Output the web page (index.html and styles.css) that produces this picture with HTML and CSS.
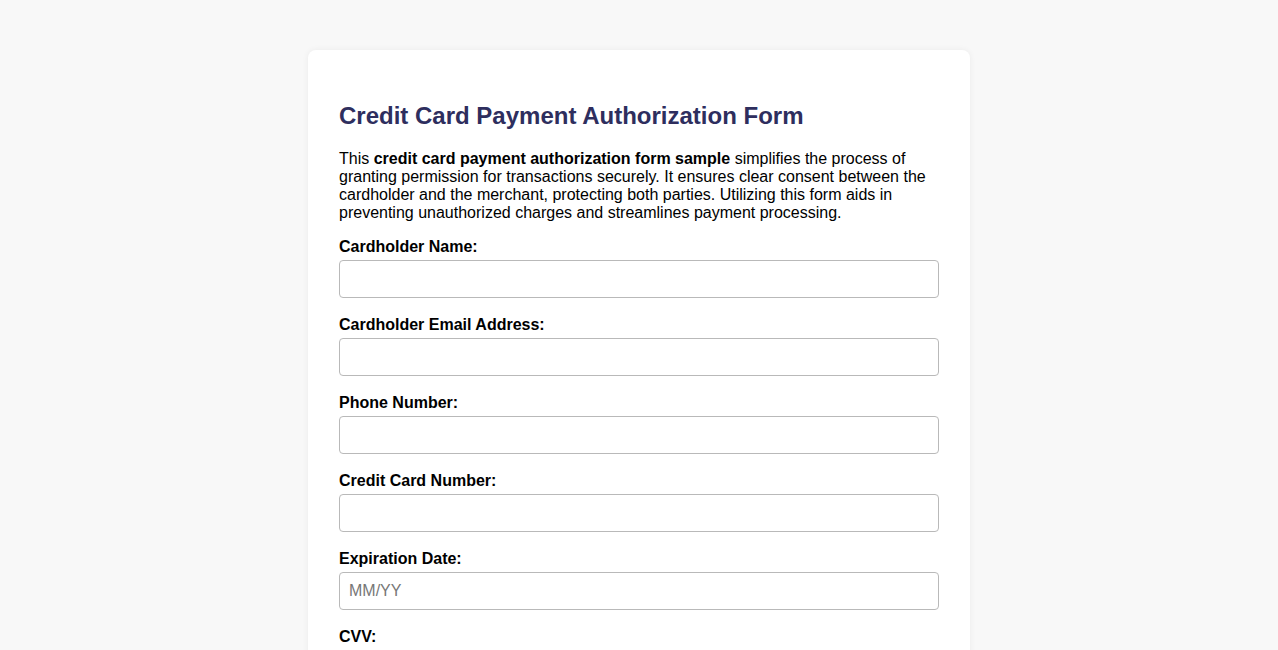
FILE: index.html
```html
<!DOCTYPE html>
<html lang="en">
<head>
<meta charset="utf-8">
<title>Credit Card Payment Authorization Form</title>
<link rel="stylesheet" href="styles.css">
</head>
<body>
<div class="card">
  <h2 class="title">Credit Card Payment Authorization Form</h2>
  <p class="intro">This <strong>credit card payment authorization form sample</strong> simplifies the process of granting permission for transactions securely. It ensures clear consent between the cardholder and the merchant, protecting both parties. Utilizing this form aids in preventing unauthorized charges and streamlines payment processing.</p>
  <form class="form">
    <div class="group">
      <label class="label" for="name">Cardholder Name:</label>
      <input class="field" id="name" type="text">
    </div>
    <div class="group">
      <label class="label" for="email">Cardholder Email Address:</label>
      <input class="field" id="email" type="email">
    </div>
    <div class="group">
      <label class="label" for="phone">Phone Number:</label>
      <input class="field" id="phone" type="tel">
    </div>
    <div class="group">
      <label class="label" for="card">Credit Card Number:</label>
      <input class="field" id="card" type="text">
    </div>
    <div class="group">
      <label class="label" for="exp">Expiration Date:</label>
      <input class="field" id="exp" type="text" placeholder="MM/YY">
    </div>
    <div class="group">
      <label class="label" for="cvv">CVV:</label>
      <input class="field" id="cvv" type="text">
    </div>
  </form>
</div>
</body>
</html>
```

FILE: styles.css
```css
html, body {
  margin: 0;
  padding: 0;
}
body {
  background: #f8f8f8;
  font-family: "Liberation Sans", Arial, sans-serif;
  color: #000;
  padding-top: 50px;
}
.card {
  width: 600px;
  margin: 0 auto;
  background: #fff;
  padding: 31px 31px 30px;
  border-radius: 8px;
  box-shadow: 0 0 6px rgba(0, 0, 0, 0.06);
  box-sizing: content-box;
}
.title {
  font-size: 24px;
  font-weight: bold;
  color: #2e2e5e;
  margin: 21px 0 20px;
}
.intro {
  font-size: 16px;
  margin: 0 0 16px;
  line-height: 18px;
}
.form {
  margin: 0;
}
.group {
  margin-bottom: 18px;
}
.label {
  display: block;
  font-size: 16px;
  font-weight: bold;
  margin-bottom: 4px;
}
.field {
  display: block;
  box-sizing: border-box;
  width: 100%;
  height: 38px;
  padding: 0 9px;
  border: 1px solid #b9b9b9;
  border-radius: 4px;
  font-family: "Liberation Sans", Arial, sans-serif;
  font-size: 16px;
  background: #fff;
  margin: 0;
}
.field::placeholder {
  color: #777;
}
```
